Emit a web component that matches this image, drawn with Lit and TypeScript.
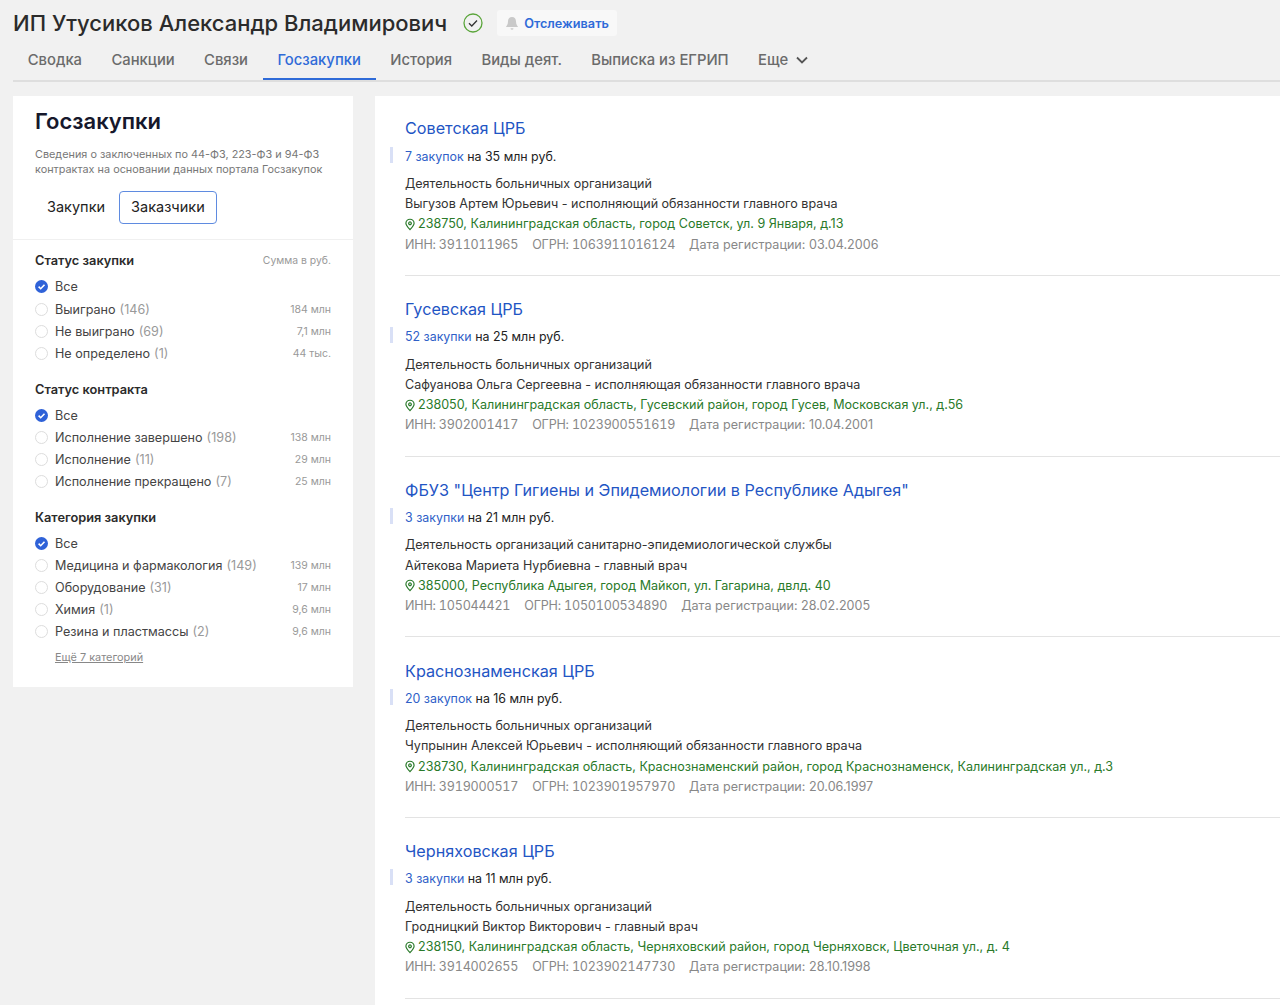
import { LitElement, css, html } from "lit";
import { customElement } from "lit/decorators.js";

type Option = { label: string; count?: string; sum?: string };
type Group = { title: string; note?: string; options: Option[]; more?: string };
type Company = {
  name: string;
  link: string;
  sum: string;
  activity: string;
  head: string;
  address: string;
  inn: string;
  ogrn: string;
  date: string;
};

const TABS = ["Сводка", "Санкции", "Связи", "Госзакупки", "История", "Виды деят.", "Выписка из ЕГРИП"];

const GROUPS: Group[] = [
  {
    title: "Статус закупки",
    note: "Сумма в руб.",
    options: [
      { label: "Все" },
      { label: "Выиграно", count: "(146)", sum: "184 млн" },
      { label: "Не выиграно", count: "(69)", sum: "7,1 млн" },
      { label: "Не определено", count: "(1)", sum: "44 тыс." },
    ],
  },
  {
    title: "Статус контракта",
    options: [
      { label: "Все" },
      { label: "Исполнение завершено", count: "(198)", sum: "138 млн" },
      { label: "Исполнение", count: "(11)", sum: "29 млн" },
      { label: "Исполнение прекращено", count: "(7)", sum: "25 млн" },
    ],
  },
  {
    title: "Категория закупки",
    options: [
      { label: "Все" },
      { label: "Медицина и фармакология", count: "(149)", sum: "139 млн" },
      { label: "Оборудование", count: "(31)", sum: "17 млн" },
      { label: "Химия", count: "(1)", sum: "9,6 млн" },
      { label: "Резина и пластмассы", count: "(2)", sum: "9,6 млн" },
    ],
    more: "Ещё 7 категорий",
  },
];

const COMPANIES: Company[] = [
  {
    name: "Советская ЦРБ",
    link: "7 закупок",
    sum: "на 35 млн руб.",
    activity: "Деятельность больничных организаций",
    head: "Выгузов Артем Юрьевич - исполняющий обязанности главного врача",
    address: "238750, Калининградская область, город Советск, ул. 9 Января, д.13",
    inn: "3911011965",
    ogrn: "1063911016124",
    date: "03.04.2006",
  },
  {
    name: "Гусевская ЦРБ",
    link: "52 закупки",
    sum: "на 25 млн руб.",
    activity: "Деятельность больничных организаций",
    head: "Сафуанова Ольга Сергеевна - исполняющая обязанности главного врача",
    address: "238050, Калининградская область, Гусевский район, город Гусев, Московская ул., д.56",
    inn: "3902001417",
    ogrn: "1023900551619",
    date: "10.04.2001",
  },
  {
    name: 'ФБУЗ "Центр Гигиены и Эпидемиологии в Республике Адыгея"',
    link: "3 закупки",
    sum: "на 21 млн руб.",
    activity: "Деятельность организаций санитарно-эпидемиологической службы",
    head: "Айтекова Мариета Нурбиевна - главный врач",
    address: "385000, Республика Адыгея, город Майкоп, ул. Гагарина, двлд. 40",
    inn: "105044421",
    ogrn: "1050100534890",
    date: "28.02.2005",
  },
  {
    name: "Краснознаменская ЦРБ",
    link: "20 закупок",
    sum: "на 16 млн руб.",
    activity: "Деятельность больничных организаций",
    head: "Чупрынин Алексей Юрьевич - исполняющий обязанности главного врача",
    address: "238730, Калининградская область, Краснознаменский район, город Краснознаменск, Калининградская ул., д.3",
    inn: "3919000517",
    ogrn: "1023901957970",
    date: "20.06.1997",
  },
  {
    name: "Черняховская ЦРБ",
    link: "3 закупки",
    sum: "на 11 млн руб.",
    activity: "Деятельность больничных организаций",
    head: "Гродницкий Виктор Викторович - главный врач",
    address: "238150, Калининградская область, Черняховский район, город Черняховск, Цветочная ул., д. 4",
    inn: "3914002655",
    ogrn: "1023902147730",
    date: "28.10.1998",
  },
];

@customElement("app-root")
export class AppRoot extends LitElement {
  static styles = css`
    :host {
      display: block;
      height: 1005px;
      overflow: hidden;
      background: #f1f1f1;
      font-family: Inter, "Noto Sans", sans-serif;
      color: #222;
    }
    .head {
      display: flex;
      align-items: center;
      height: 46px;
      padding-left: 13px;
    }
    h1 {
      margin: 0;
      font-size: 22px;
      font-weight: 500;
      color: #2b2b2b;
      white-space: nowrap;
    }
    .verified {
      margin-left: 16px;
      width: 20px;
      height: 20px;
    }
    .track {
      display: flex;
      align-items: center;
      gap: 5px;
      height: 26px;
      margin-left: 14px;
      padding: 0 8px 0 8px;
      background: #f8f8f8;
      border-radius: 3px;
      font-size: 12.7px;
      font-weight: 600;
      color: #2f6bd8;
    }
    .tabs {
      display: flex;
      align-items: stretch;
      height: 34px;
      margin-left: 13px;
      border-bottom: 2px solid #dedede;
    }
    .tab {
      display: flex;
      align-items: center;
      gap: 7px;
      padding: 0 14.7px 4px;
      border-bottom: 2px solid transparent;
      font-size: 14.8px;
      font-weight: 500;
      color: #6b6b6b;
    }
    .tab.active {
      color: #2f6bd8;
      border-bottom-color: #2f6bd8;
    }
    .body {
      display: flex;
      align-items: flex-start;
      gap: 22px;
      margin-top: 14px;
      padding-left: 13px;
    }
    .side {
      flex: none;
      box-sizing: border-box;
      width: 340px;
      height: 591px;
      background: #fff;
    }
    .intro {
      height: 144px;
      box-sizing: border-box;
      padding: 12px 22px 0;
      border-bottom: 1px solid #f0f0f0;
    }
    h2 {
      margin: 0;
      font-size: 22px;
      line-height: 27px;
      font-weight: 600;
      color: #16182c;
    }
    .intro p {
      margin: 12px 0 0;
      font-size: 10.85px;
      line-height: 14.5px;
      color: #777;
    }
    .switch {
      display: flex;
      align-items: center;
      gap: 2px;
      margin-top: 15px;
      font-size: 14.5px;
      color: #222;
    }
    .switch span {
      box-sizing: border-box;
      height: 33px;
      line-height: 29px;
      padding: 0 11px;
      border: 1px solid transparent;
      border-radius: 4px;
    }
    .switch .on {
      border-color: #5f8be0;
    }
    .groups {
      padding: 10px 22px 0;
    }
    .group + .group {
      margin-top: 15px;
    }
    .group + .group:last-child {
      margin-top: 15px;
    }
    .group-head {
      display: flex;
      justify-content: space-between;
      align-items: center;
      height: 20px;
      margin-bottom: 5px;
      font-size: 12.8px;
      font-weight: 600;
      color: #2b2b2b;
    }
    .note {
      font-size: 10.4px;
      font-weight: 400;
      color: #999;
    }
    .option {
      display: flex;
      align-items: center;
      height: 22px;
      font-size: 12.6px;
      color: #444;
    }
    .group:first-child .group-head + .option {
      height: 23px;
    }
    .radio {
      flex: none;
      box-sizing: border-box;
      width: 13px;
      height: 13px;
      margin-right: 7px;
      border: 1px solid #ddd;
      border-radius: 50%;
    }
    .check {
      flex: none;
      width: 13px;
      height: 13px;
      margin-right: 7px;
    }
    .count {
      margin-left: 4px;
      color: #999;
    }
    .sum {
      margin-left: auto;
      font-size: 10.5px;
      color: #999;
    }
    .more {
      display: block;
      margin: 8px 0 0 20px;
      font-size: 10.9px;
      color: #888;
      text-decoration: underline;
    }
    .list {
      flex: 1;
      min-width: 0;
      height: 909px;
      padding-left: 30px;
      background: #fff;
      overflow: hidden;
    }
    .company {
      box-sizing: border-box;
      height: 180.7px;
      padding-top: 23.2px;
      border-bottom: 1px solid #e3e3e3;
    }
    .company:first-child {
      height: 180.1px;
      padding-top: 22px;
    }
    .name {
      font-size: 16.2px;
      line-height: 21px;
      color: #1f55c4;
    }
    .deals {
      position: relative;
      margin-top: 7px;
      height: 20px;
      line-height: 20px;
      font-size: 12.4px;
      color: #222;
    }
    .company:first-child .deals {
      margin-top: 7.5px;
    }
    .deals::before {
      content: "";
      position: absolute;
      left: -15px;
      top: 0;
      width: 3px;
      height: 16px;
      background: #d9e0f6;
    }
    .deals a {
      color: #2f5fc8;
    }
    .lines {
      margin-top: 7.5px;
      font-size: 12.55px;
      line-height: 20.2px;
      color: #333;
      white-space: nowrap;
    }
    .address {
      display: flex;
      align-items: center;
      gap: 3px;
      color: #2a7a2a;
    }
    .pin {
      width: 10px;
      height: 13px;
      flex: none;
    }
    .meta {
      display: flex;
      gap: 14px;
      color: #888;
    }
    .num {
      font-variant-numeric: tabular-nums;
      letter-spacing: -0.2px;
    }
    .date {
      letter-spacing: 0.03px;
    }
  `;

  private renderOption(o: Option, i: number) {
    return html`<div class="option">
      ${i === 0
        ? html`<svg class="check" viewBox="0 0 13 13">
            <circle cx="6.5" cy="6.5" r="6.5" fill="#2f62d8" />
            <path d="M3.6 6.6l2.1 2.1 3.8-4" fill="none" stroke="#fff" stroke-width="1.6" />
          </svg>`
        : html`<span class="radio"></span>`}
      <span>${o.label}</span>
      ${o.count ? html`<span class="count">${o.count}</span>` : null}
      ${o.sum ? html`<span class="sum">${o.sum}</span>` : null}
    </div>`;
  }

  private renderCompany(c: Company) {
    return html`<article class="company">
      <div class="name">${c.name}</div>
      <div class="deals"><a>${c.link}</a> ${c.sum}</div>
      <div class="lines">
        <div>${c.activity}</div>
        <div>${c.head}</div>
        <div class="address">
          <svg class="pin" viewBox="0 0 11 13" fill="none" stroke="#2a7a2a" stroke-width="1.3">
            <path d="M5.5 12.200C3 9.600 1 7.600 1 5.200a4.500 4.500 0 0 1 9 0c0 2.400-2 4.400-4.500 7z" />
            <circle cx="5.500" cy="5.200" r="1.500" />
          </svg>
          <span>${c.address}</span>
        </div>
        <div class="meta">
          <span class="num">ИНН: ${c.inn}</span>
          <span class="num">ОГРН: ${c.ogrn}</span>
          <span class="date">Дата регистрации: ${c.date}</span>
        </div>
      </div>
    </article>`;
  }

  render() {
    return html`
      <header class="head">
        <h1>ИП Утусиков Александр Владимирович</h1>
        <svg class="verified" viewBox="0 0 20 20" fill="none" stroke="#5aa53a" stroke-width="1.300">
          <circle cx="10" cy="10" r="9" />
          <path d="M6 10.200l2.800 2.800L14 7.500" stroke="#333" />
        </svg>
        <div class="track">
          <svg width="14" height="15" viewBox="0 0 14 15" fill="#c9c9c9">
            <path d="M7 1c-2.600 0-4 2-4 4.500 0 3-1.500 4.300-2 5.500h12c-.5-1.200-2-2.500-2-5.500C11 3 9.600 1 7 1zM5.500 12.200a1.500 1.500 0 0 0 3 0z" />
          </svg>
          Отслеживать
        </div>
      </header>
      <nav class="tabs">
        ${TABS.map((t) => html`<div class="tab ${t === "Госзакупки" ? "active" : ""}">${t}</div>`)}
        <div class="tab">
          Еще
          <svg width="14" height="9" viewBox="0 0 14 9" fill="none" stroke="#555" stroke-width="1.800">
            <path d="M2 1.500l5 5 5-5" />
          </svg>
        </div>
      </nav>
      <div class="body">
        <aside class="side">
          <div class="intro">
            <h2>Госзакупки</h2>
            <p>Сведения о заключенных по 44-ФЗ, 223-ФЗ и 94-ФЗ<br />контрактах на основании данных портала Госзакупок</p>
            <div class="switch"><span>Закупки</span><span class="on">Заказчики</span></div>
          </div>
          <div class="groups">
            ${GROUPS.map(
              (g) => html`<section class="group">
                <div class="group-head">
                  <span>${g.title}</span>
                  ${g.note ? html`<span class="note">${g.note}</span>` : null}
                </div>
                ${g.options.map((o, i) => this.renderOption(o, i))}
                ${g.more ? html`<a class="more">${g.more}</a>` : null}
              </section>`,
            )}
          </div>
        </aside>
        <main class="list">${COMPANIES.map((c) => this.renderCompany(c))}</main>
      </div>
    `;
  }
}

declare global {
  interface HTMLElementTagNameMap {
    "app-root": AppRoot;
  }
}
